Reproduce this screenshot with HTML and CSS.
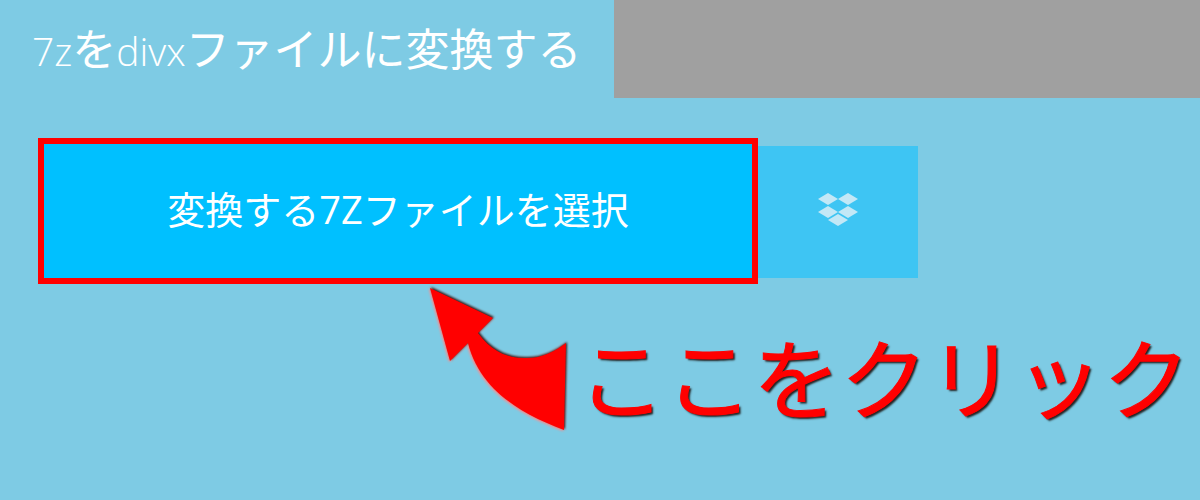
FILE: index.html
```html
<!DOCTYPE html>
<html lang="ja">
<head>
    <meta charset="UTF-8">
    <title>7zをdivxファイルに変換する</title>
    <link rel="stylesheet" href="styles.css">
</head>
<body>
    <div class="header">
        <h1 class="title">7z<span class="jp">を</span>divx<span class="jp">ファイルに変換する</span></h1>
        <div class="ad"></div>
    </div>

    <div class="upload">
        <button class="choose"><span class="jp">変換する</span>7Z<span class="jp">ファイルを選択</span></button>
        <button class="dropbox">
            <svg width="40" height="34" viewBox="0 0 40 34">
                <path d="M10 0 20 6 10 12 0 6Z"/>
                <path d="M30 0 40 6 30 12 20 6Z"/>
                <path d="M10 13 20 19 10 25 0 19Z"/>
                <path d="M30 13 40 19 30 25 20 19Z"/>
                <path d="M20 21 30 27 20 33 10 27Z"/>
            </svg>
        </button>
    </div>

    <!-- 注釈 -->
    <svg class="arrow" width="155" height="160" viewBox="0 0 155 160">
        <path class="arrow-shape" d="M10 8 73 38 58 53 C72 72 88 78 104 78 C120 79 134 72 146 63 L144 150 C100 133 60 110 48 63 L30 81Z"/>
    </svg>
    <div class="note">ここをクリック</div>
</body>
</html>
```

FILE: styles.css
```css
body {
    margin: 0;
    height: 500px;
    overflow: hidden;
    background-color: #7ecbe4;
    font-family: "Open Sans", "Noto Sans CJK JP", sans-serif;
}
.jp {
    font-family: "Noto Sans CJK JP", sans-serif;
    font-weight: 400;
}
.header {
    display: flex;
    height: 98px;
}
.title {
    width: 614px;
    margin: 0;
    padding: 21px 0 0 32px;
    box-sizing: border-box;
    color: white;
    font-size: 39px;
    font-weight: 300;
    line-height: 52px;
    white-space: nowrap;
}
.title .jp {
    font-size: 44px;
}
.ad {
    flex: 1;
    background-color: #a0a0a0;
}
.upload {
    display: flex;
    margin: 40px 0 0 38px;
}
.choose {
    width: 720px;
    height: 146px;
    border: 6px solid #ff0000;
    background-color: #00c0ff;
    color: white;
    font-family: inherit;
    font-size: 38px;
    padding: 0 0 8px;
}
.choose .jp {
    font-size: 38px;
}
.dropbox {
    display: flex;
    justify-content: center;
    align-items: center;
    width: 160px;
    height: 132px;
    margin-top: 8px;
    border: none;
    padding: 0 0 4px;
    background-color: #3ec5f3;
}
.dropbox svg {
    fill: #c3e8f6;
}
.arrow {
    position: absolute;
    left: 420px;
    top: 280px;
}
.arrow-shape {
    fill: #ff0000;
    filter: drop-shadow(1px -1px 1px #222) drop-shadow(-1px 1px 1px #ff8a8a);
}
.note {
    position: absolute;
    left: 578px;
    top: 320px;
    color: #ff0000;
    font-family: "Noto Sans CJK JP", sans-serif;
    font-size: 87.5px;
    font-weight: 400;
    line-height: 110px;
    white-space: nowrap;
    -webkit-text-stroke: 1px #ff0000;
    text-shadow: 2px 2px 2px #222;
}
```
